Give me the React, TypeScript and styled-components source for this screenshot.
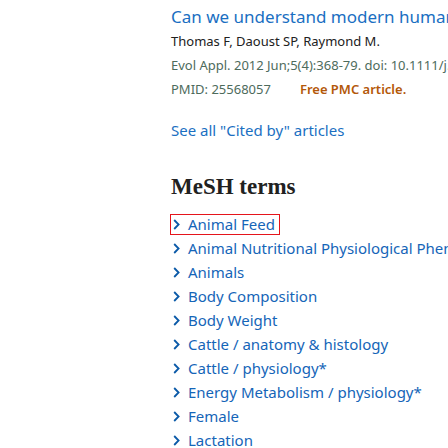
import React from "react";
import styled, { createGlobalStyle } from "styled-components";

const Global = createGlobalStyle`
  html, body { margin: 0; padding: 0; background: #fff; }
  body { font-family: "Noto Sans", "Open Sans", sans-serif; font-weight: 400; font-stretch: normal; }
`;

const Page = styled.div`
  width: 448px;
  height: 448px;
  overflow: hidden;
  box-sizing: border-box;
  padding: 5px 0 0 171px;
`;

const Line = styled.div<{ $size?: number; $color?: string }>`
  font-size: ${(p) => p.$size ?? 13}px;
  line-height: 24px;
  color: ${(p) => p.$color ?? "#212121"};
  white-space: nowrap;
`;

const Title = styled(Line)`
  color: #1a6fc2;
`;

const Citation = styled(Line)`
  display: flex;
  gap: 29px;
`;

const Free = styled.span`
  color: #b3580a;
  font-weight: 600;
`;

const SeeAll = styled.div`
  margin-top: 17px;
  font-size: 15px;
  line-height: 24px;
  color: #1a6fc2;
  white-space: nowrap;
`;

const Heading = styled.h2`
  margin: 33px 0 0;
  font-family: "Liberation Serif", "Times New Roman", serif;
  font-weight: 700;
  font-size: 23px;
  line-height: 24px;
  color: #212121;
`;

const List = styled.ul`
  list-style: none;
  margin: 13px 0 0;
  padding: 0;
`;

const Item = styled.li`
  height: 24px;
  display: flex;
  align-items: center;
  white-space: nowrap;
`;

const Term = styled.span<{ $focus?: boolean }>`
  display: inline-flex;
  align-items: center;
  gap: 8px;
  height: 21px;
  box-sizing: border-box;
  margin-left: -1px;
  padding: 0 ${(p) => (p.$focus ? 4 : 5)}px 0 2px;
  border: ${(p) => (p.$focus ? "1px solid #e5141b" : "1px solid transparent")};
  font-size: 15px;
  color: #1565b8;
`;

const Chevron = () => (
  <svg width="7" height="11" viewBox="0 0 7 11">
    <path d="M1.2 1 L5.6 5.5 L1.2 10" fill="none" stroke="#0b5aa8" strokeWidth="1.8" />
  </svg>
);

const terms = [
  "Animal Feed",
  "Animal Nutritional Physiological Phenomena",
  "Animals",
  "Body Composition",
  "Body Weight",
  "Cattle / anatomy & histology",
  "Cattle / physiology*",
  "Energy Metabolism / physiology*",
  "Female",
  "Lactation",
];

export default function App() {
  return (
    <Page>
      <Global />
      <Title $size={17}>Can we understand modern humans from the perspective of evolutionary biology?</Title>
      <Line>Thomas F, Daoust SP, Raymond M.</Line>
      <Citation $color="#4d6b5c">
        <span>Evol Appl. 2012 Jun;5(4):368-79. doi: 10.1111/j.1752-4571.2011.00220.x.</span>
      </Citation>
      <Citation $color="#4d6b5c">
        <span>PMID: 25568057</span>
        <Free>Free PMC article.</Free>
      </Citation>
      <SeeAll>See all "Cited by" articles</SeeAll>
      <Heading>MeSH terms</Heading>
      <List>
        {terms.map((t, i) => (
          <Item key={t}>
            <Term $focus={i === 0}>
              <Chevron />
              {t}
            </Term>
          </Item>
        ))}
      </List>
    </Page>
  );
}
